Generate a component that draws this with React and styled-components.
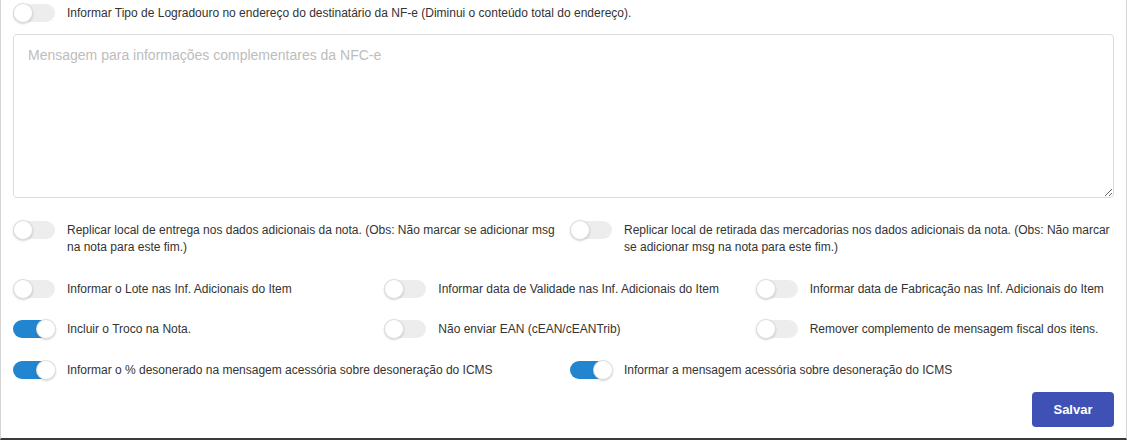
import React, { useState } from "react";
import styled, { createGlobalStyle } from "styled-components";

const GlobalStyle = createGlobalStyle`
  html, body {
    margin: 0;
    padding: 0;
    background: #fff;
  }
  body {
    font-family: "Liberation Sans", Arial, sans-serif;
  }
`;

const Card = styled.div`
  box-sizing: border-box;
  width: 1127px;
  height: 440px;
  background: #fff;
  border-left: 1px solid #d4d4d4;
  border-right: 1px solid #d4d4d4;
  border-bottom: 2px solid #3a3a3a;
  padding: 4px 12px 0 12px;
  color: #333;
  font-size: 12px;
`;

const Row = styled.div`
  display: grid;
  grid-template-columns: repeat(${(p) => p.$cols || 1}, 1fr);
  column-gap: 13px;
  row-gap: ${(p) => p.$rowGap || 0}px;
  margin-bottom: ${(p) => p.$mb || 0}px;
`;

const Field = styled.label`
  display: flex;
  align-items: flex-start;
  gap: 12px;
  line-height: 17px;
  cursor: pointer;
`;

const Track = styled.span`
  position: relative;
  flex: 0 0 42px;
  width: 42px;
  height: 18px;
  border-radius: 9px;
  background: ${(p) => (p.$on ? "#2185d0" : "#ededed")};
  margin-top: 0;
`;

const Knob = styled.span`
  position: absolute;
  top: -1px;
  left: ${(p) => (p.$on ? "23px" : "0px")};
  width: 20px;
  height: 20px;
  border-radius: 50%;
  background: #fff;
  box-shadow: 0 1px 2px rgba(34, 36, 38, 0.2), 0 0 0 1px rgba(34, 36, 38, 0.15) inset;
`;

const Text = styled.span`
  padding-top: 1px;
`;

const Message = styled.textarea`
  display: block;
  box-sizing: border-box;
  width: 100%;
  height: 164px;
  margin: 12px 0 23px;
  padding: 12px 14px;
  border: 1px solid #dcdcdc;
  border-radius: 4px;
  font-family: "Liberation Sans", Arial, sans-serif;
  font-size: 14px;
  color: #333;
  outline: none;
  &::placeholder {
    color: #bdbdbd;
  }
`;

const Footer = styled.div`
  display: flex;
  justify-content: flex-end;
`;

const SaveButton = styled.button`
  width: 82px;
  height: 35px;
  border: none;
  border-radius: 4px;
  background: #3f51b5;
  color: #fff;
  font-family: "Liberation Sans", Arial, sans-serif;
  font-weight: 700;
  font-size: 13px;
  cursor: pointer;
`;

function Toggle({ label, initial = false }) {
  const [on, setOn] = useState(initial);
  return (
    <Field onClick={() => setOn(!on)}>
      <Track $on={on}>
        <Knob $on={on} />
      </Track>
      <Text>{label}</Text>
    </Field>
  );
}

export default function App() {
  return (
    <>
      <GlobalStyle />
      <Card>
        <Row>
          <Toggle label="Informar Tipo de Logradouro no endereço do destinatário da NF-e (Diminui o conteúdo total do endereço)." />
        </Row>

        <Message placeholder="Mensagem para informações complementares da NFC-e" />

        <Row $cols={2} $mb={24}>
          <Toggle label="Replicar local de entrega nos dados adicionais da nota. (Obs: Não marcar se adicionar msg na nota para este fim.)" />
          <Toggle label="Replicar local de retirada das mercadorias nos dados adicionais da nota. (Obs: Não marcar se adicionar msg na nota para este fim.)" />
        </Row>

        <Row $cols={3} $rowGap={22} $mb={23}>
          <Toggle label="Informar o Lote nas Inf. Adicionais do Item" />
          <Toggle label="Informar data de Validade nas Inf. Adicionais do Item" />
          <Toggle label="Informar data de Fabricação nas Inf. Adicionais do Item" />
          <Toggle label="Incluir o Troco na Nota." initial />
          <Toggle label="Não enviar EAN (cEAN/cEANTrib)" />
          <Toggle label="Remover complemento de mensagem fiscal dos itens." />
        </Row>

        <Row $cols={2} $mb={13}>
          <Toggle label="Informar o % desonerado na mensagem acessória sobre desoneração do ICMS" initial />
          <Toggle label="Informar a mensagem acessória sobre desoneração do ICMS" initial />
        </Row>

        <Footer>
          <SaveButton>Salvar</SaveButton>
        </Footer>
      </Card>
    </>
  );
}
